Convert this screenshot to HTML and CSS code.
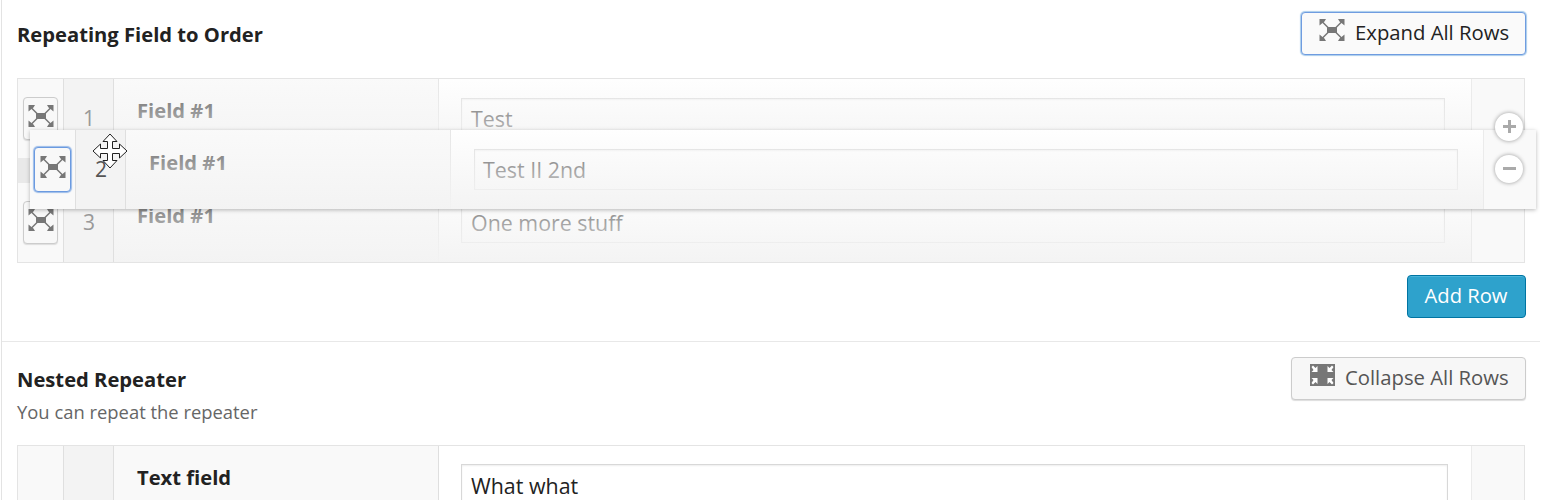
FILE: index.html
```html
<!DOCTYPE html>
<html lang="en">
<head>
<meta charset="utf-8">
<title>Repeater fields</title>
<link rel="stylesheet" href="styles.css">
</head>
<body>
<svg class="defs" width="0" height="0" aria-hidden="true">
  <symbol id="expand" viewBox="0 0 26 22">
    <path d="M8 8h10v6h-10z"/>
    <path d="M0.500 0h6.500L5.500 2.500 3.500 4 0.500 6.500zM25.500 0h-6.500l1.500 2.500 2 1.500 3 2.500zM0.500 22h6.500L5.500 19.500 3.500 18 0.500 15.500zM25.500 22h-6.500l1.500-2.500 2-1.500 3-2.500z"/>
    <path fill="none" stroke="#777" stroke-width="1.500" d="M3 2.500l6 6M23 2.500l-6 6M3 19.500l6-6M23 19.500l-6-6"/>
  </symbol>
  <symbol id="collapse" viewBox="0 0 25 22">
    <path d="M0 0h25v22H0z"/>
    <path fill="#fff" d="M1.500 3L3 1.500l2.500 2.500L7.500 2v6h-6l2-2zM23.500 3L22 1.500 19.500 4l-2-2v6h6l-2-2zM1.500 19L3 20.500 5.500 18l2 2v-6h-6l2 2zM23.500 19L22 20.500 19.500 18l-2 2v-6h6l-2 2z"/>
  </symbol>
</svg>
<main class="panel">
  <section class="field first">
    <header class="head">
      <h2 class="title">Repeating Field to Order</h2>
      <button class="btn focus"><svg class="ico"><use href="#expand"/></svg>Expand All Rows</button>
    </header>
    <div class="table">
      <div class="row">
        <div class="toggle"><button class="mini"><svg class="ico"><use href="#expand"/></svg></button></div>
        <div class="num">1</div>
        <div class="body faded"><div class="label">Field #1</div><div class="value"><div class="input">Test</div></div></div>
        <div class="actions"></div>
      </div>
      <div class="placeholder"></div>
      <div class="row">
        <div class="toggle"><button class="mini"><svg class="ico"><use href="#expand"/></svg></button></div>
        <div class="num">3</div>
        <div class="body faded"><div class="label low">Field #1</div><div class="value"><div class="input">One more stuff</div></div></div>
        <div class="actions"></div>
      </div>
      <div class="row dragged">
        <div class="toggle"><button class="mini active"><svg class="ico"><use href="#expand"/></svg></button></div>
        <div class="num dark">2</div>
        <div class="body faded"><div class="label">Field #1</div><div class="value"><div class="input">Test II 2nd</div></div></div>
        <div class="actions"></div>
      </div>
      <div class="round plus"></div>
      <div class="round minus"></div>
      <svg class="cursor" viewBox="0 0 36 36"><path fill="#fff" stroke="#222" d="M18 1L25 8.500H20.500V15.500H27.500V11L35 18L27.500 25V20.500H20.500V27.500H25L18 35L11 27.500H15.500V20.500H8.500V25L1 18L8.500 11V15.500H15.500V8.500H11Z"/></svg>
    </div>
    <div class="foot"><button class="add">Add Row</button></div>
  </section>
  <section class="field second">
    <header class="head">
      <div><h2 class="title">Nested Repeater</h2><p class="desc">You can repeat the repeater</p></div>
      <button class="btn"><svg class="ico col"><use href="#collapse"/></svg>Collapse All Rows</button>
    </header>
    <div class="table">
      <div class="row tall">
        <div class="toggle"></div>
        <div class="num"></div>
        <div class="body"><div class="label">Text field</div><div class="value"><div class="input wide">What what</div></div></div>
        <div class="actions"></div>
      </div>
    </div>
  </section>
</main>
</body>
</html>
```
FILE: styles.css
```css
* { box-sizing: border-box; }
html, body { margin: 0; height: 500px; overflow: hidden; background: #fff; }
body { font: 20px/28px "Open Sans", sans-serif; color: #222; }
button { font: inherit; padding: 0; margin: 0; }
.defs { display: block; position: absolute; }
.panel { width: 1539px; margin-left: 1px; border-left: 1px solid #e3e3e3; height: 500px; overflow: hidden; }
.field { padding: 0 15px; }
.first { height: 342px; padding-top: 12px; border-bottom: 1px solid #e8e8e8; }
.second { padding-top: 15px; }
.head { display: flex; justify-content: space-between; align-items: flex-start; width: 1509px; }
.first .head { height: 66px; }
.second .head { width: 1509px; height: 88px; }
.title { margin: 8px 0 0; font-size: 20.200px; line-height: 28px; font-weight: 700; color: #222; }
.desc { margin: 5px 0 0; font-size: 18.400px; line-height: 28px; color: #666; }
.btn { display: flex; align-items: center; height: 43px; width: 235px; padding: 0 0 3px 18px; border: 1px solid #ccc; border-radius: 4px; background: #f7f7f7; box-shadow: 0 1px 1px #ddd; color: #555; font-size: 20.300px; white-space: nowrap; }
.btn.focus { width: 225px; padding-left: 17px; background: #fafafa; border-color: #6f9ce0; box-shadow: 0 0 1px 1px #a9cdec; color: #222; }
.ico { width: 26px; height: 22px; fill: #777; flex: none; display: block; }
.btn .ico { margin: -4px 10px 0 0; }
.btn .col { width: 25px; }
.table { position: relative; width: 1508px; border: 1px solid #e4e4e4; }
.row { display: flex; height: 79px; width: 1506px; background: #fff; }
.toggle { width: 46px; flex: none; padding: 18px 0 0 5px; background: #f9f9f9; border-right: 1px solid #dfdfdf; }
.num { width: 50px; flex: none; padding: 25px 0 0 1px; text-align: center; font-size: 21px; background: #f3f3f3; border-right: 1px solid #dfdfdf; color: #999; }
.num.dark { color: #555; }
.body { display: flex; flex: 1; position: relative; }
.faded::after { content: ""; position: absolute; inset: 0; background: linear-gradient(rgba(252,252,252,.26), rgba(243,243,243,.96)); }
.label { width: 325px; flex: none; padding: 17px 23px; font-size: 20.200px; font-weight: 700; background: #f9f9f9; border-right: 1px solid #dfdfdf; }
.label.low { padding-top: 18px; }
.value { flex: 1; padding: 19px 0 0 22px; }
.input { width: 984px; height: 41px; border: 1px solid #d8d8d8; box-shadow: inset 0 1px 2px #eee; padding: 6px 9px; color: #222; font-size: 21.400px; }
.input.wide { width: 987px; }
.actions { width: 53px; flex: none; background: #f9f9f9; border-left: 1px solid #ebebeb; }
.mini { display: block; width: 35px; height: 43px; border: 1px solid #ccc; border-radius: 4px; background: #f8f8f8; box-shadow: 0 1px 1px #ddd; padding: 0 0 5px 4px; }
.mini.active { width: 37px; height: 45px; border: 1px solid #6b9ae0; box-shadow: 0 0 1px 1px #9abbe8; padding-left: 5px; }
.placeholder { height: 25px; background: #e9e9e9; }
.dragged { position: absolute; left: 12px; top: 51px; height: 79px; box-shadow: 0 1px 4px rgba(0,0,0,.28); }
.dragged .toggle { padding: 17px 0 0 4px; }
.dragged .label { padding-top: 18px; }
.dragged .value { padding-left: 23px; }
.dragged .input { padding-left: 8px; }
.round { position: absolute; left: 1477px; width: 28px; height: 28px; border-radius: 50%; background: #fff; box-shadow: 0 0 4px rgba(0,0,0,.4); }
.plus { top: 34px; }
.minus { top: 76px; }
.round::before, .plus::after { content: ""; position: absolute; background: #aaa; left: 8px; top: 12px; width: 13px; height: 3px; }
.plus::after { left: 13px; top: 7px; width: 3px; height: 13px; }
.cursor { position: absolute; left: 74px; top: 54px; width: 36px; height: 36px; }
.foot { display: flex; justify-content: flex-end; width: 1509px; padding-top: 12px; }
.add { width: 119px; height: 43px; border: 1px solid #0074a2; border-radius: 4px; background: #2ea2cc; box-shadow: inset 0 1px 0 #49b4da; color: #fff; padding: 0 1px 4px 0; font-size: 20.200px; }
.tall { height: 100px; }
.second .value { padding-top: 18px; }
.second .input { padding-top: 7px; }
```
